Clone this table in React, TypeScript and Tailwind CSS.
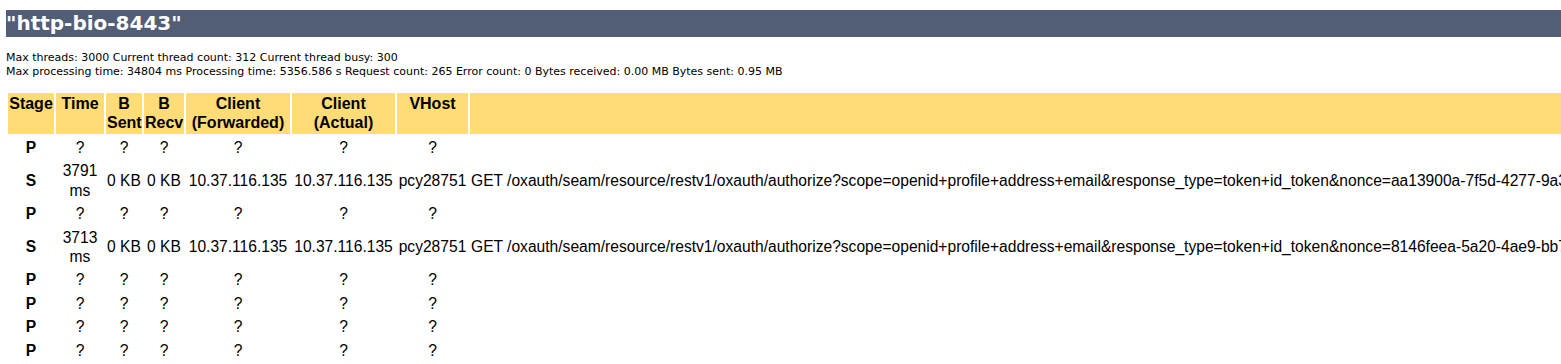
import React from "react";

const head = [
  { l1: "Stage", l2: "", w: "w-[46px]" },
  { l1: "Time", l2: "", w: "w-[48px]" },
  { l1: "B", l2: "Sent", w: "w-[36px]" },
  { l1: "B", l2: "Recv", w: "w-[40px]" },
  { l1: "Client", l2: "(Forwarded)", w: "w-[104px]" },
  { l1: "Client", l2: "(Actual)", w: "w-[103px]" },
  { l1: "VHost", l2: "", w: "w-[71px]" },
];

type Row = { stage: string; time?: string; nonce?: string };

const rows: Row[] = [
  { stage: "P" },
  { stage: "S", time: "3791", nonce: "aa13900a-7f5d-4277-9a3e-5c2d81f7b064" },
  { stage: "P" },
  { stage: "S", time: "3713", nonce: "8146feea-5a20-4ae9-bb71-0d3c9e52a8f6" },
  { stage: "P" },
  { stage: "P" },
  { stage: "P" },
  { stage: "P" },
];

const base =
  "GET /oxauth/seam/resource/restv1/oxauth/authorize?scope=openid+profile+address+email&response_type=token+id_token&nonce=";

export default function App() {
  return (
    <div className="w-[1561px] h-[364px] overflow-hidden bg-white pl-[6px] pt-[10px]">
      <h1
        className="w-full h-[27px] bg-[#525D76] text-white font-bold text-[20px] leading-[27px] whitespace-nowrap"
        style={{ fontFamily: '"DejaVu Sans", sans-serif' }}
      >
        "http-bio-8443"
      </h1>
      <p
        className="mt-[14px] text-[11px] leading-[14px] text-black whitespace-nowrap"
        style={{ fontFamily: '"DejaVu Sans", sans-serif' }}
      >
        Max threads: 3000 Current thread count: 312 Current thread busy: 300
        <br />
        Max processing time: 34804 ms Processing time: 5356.586 s Request count: 265 Error count: 0 Bytes received: 0.00 MB Bytes sent: 0.95 MB
      </p>
      <table
        className="mt-[12px] table-fixed w-[2400px] border-separate border-spacing-[2px] text-[15.6px] leading-[19.4px] text-black"
        style={{ fontFamily: '"Liberation Sans", Arial, sans-serif' }}
      >
        <thead>
          <tr>
            {head.map((h, i) => (
              <th
                key={i}
                className={`${h.w} bg-[#FFDC75] font-bold text-[16px] text-center align-top p-[1px] h-[41px] whitespace-nowrap`}
              >
                {h.l1}
                {h.l2 && (
                  <>
                    <br />
                    {h.l2}
                  </>
                )}
              </th>
            ))}
            <th className="bg-[#FFDC75] p-[1px]"></th>
          </tr>
        </thead>
        <tbody>
          {rows.map((r, i) => {
            const s = r.stage === "S";
            return (
              <tr key={i}>
                <td className="pt-[2px] pb-0 px-[1px] text-center align-middle font-bold">{r.stage}</td>
                <td className="pt-[2px] pb-0 px-[1px] text-center align-middle">
                  {s ? (
                    <>
                      {r.time}
                      <br />
                      ms
                    </>
                  ) : (
                    "?"
                  )}
                </td>
                <td className="pt-[2px] pb-0 px-[1px] text-center align-middle whitespace-nowrap">{s ? "0 KB" : "?"}</td>
                <td className="pt-[2px] pb-0 px-[1px] text-center align-middle whitespace-nowrap">{s ? "0 KB" : "?"}</td>
                <td className="pt-[2px] pb-0 px-[1px] text-center align-middle whitespace-nowrap">{s ? "10.37.116.135" : "?"}</td>
                <td className="pt-[2px] pb-0 px-[1px] text-center align-middle whitespace-nowrap">{s ? "10.37.116.135" : "?"}</td>
                <td className="pt-[2px] pb-0 px-[1px] text-center align-middle whitespace-nowrap">{s ? "pcy28751" : "?"}</td>
                <td className="pt-[2px] pb-0 px-[1px] text-left align-middle whitespace-nowrap overflow-hidden">
                  {s ? base + r.nonce + "&redirect_uri=https://pcy28751/oxauth-rp/home.htm HTTP/1.1" : ""}
                </td>
              </tr>
            );
          })}
        </tbody>
      </table>
    </div>
  );
}
